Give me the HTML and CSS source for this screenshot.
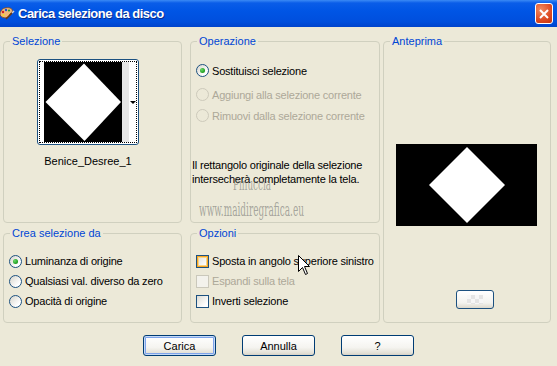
FILE: index.html
```html
<!DOCTYPE html>
<html lang="it">
<head>
    <meta charset="UTF-8">
    <title>Carica selezione da disco</title>
    <link rel="stylesheet" href="styles.css">
</head>
<body>
    <div class="window">
        <div class="titlebar">
            <svg class="app-icon" width="16" height="16" viewBox="0 0 16 16">
                <path d="M2 5 C3 2 8 1 11 2 C14 3 14 6 12 7 C10 8 11 10 9 11 C6 13 1 11 1 8 C1 7 1.5 6 2 5 Z" fill="#f0b878" stroke="#8a4a1c" stroke-width="0.8"/>
                <circle cx="4" cy="6" r="1.2" fill="#d02020"/>
                <circle cx="7" cy="4" r="1.2" fill="#2050d0"/>
                <circle cx="10" cy="4.5" r="1.1" fill="#20a030"/>
                <circle cx="4.5" cy="9" r="1.1" fill="#f0e020"/>
                <path d="M7 13 L13 7" stroke="#6a3a10" stroke-width="1.6"/>
                <path d="M13 7 L15 5" stroke="#d0d0d0" stroke-width="1.4"/>
            </svg>
            <span class="title">Carica selezione da disco</span>
            <span class="close-btn">
                <svg width="10" height="10" viewBox="0 0 10 10">
                    <path d="M1 1 L9 9 M9 1 L1 9" stroke="#fff" stroke-width="2"/>
                </svg>
            </span>
        </div>

        <div class="content">
            <div class="panels">
                <div class="left-grid">
                    <fieldset class="group">
                        <legend>Selezione</legend>
                        <div class="sel-body">
                            <div class="thumb">
                                <div class="thumb-focus">
                                    <svg class="thumb-img" width="78" height="80" viewBox="0 0 78 80">
                                        <rect width="78" height="80" fill="#000"/>
                                        <polygon points="40,1.5 77,40 40.5,79 1.5,40" fill="#fff"/>
                                    </svg>
                                    <span class="thumb-strip"></span>
                                    <span class="thumb-arrow"></span>
                                </div>
                            </div>
                            <div class="thumb-name">Benice_Desree_1</div>
                        </div>
                    </fieldset>

                    <fieldset class="group">
                        <legend>Operazione</legend>
                        <div class="op-body">
                            <div class="choices op-choices">
                                <div class="choice"><span class="radio checked"></span>Sostituisci selezione</div>
                                <div class="choice disabled"><span class="radio"></span>Aggiungi alla selezione corrente</div>
                                <div class="choice disabled"><span class="radio"></span>Rimuovi dalla selezione corrente</div>
                            </div>
                            <p class="note">Il rettangolo originale della selezione<br>intersecherà completamente la tela.</p>
                            <div class="watermark">
                                <span class="wm-name">Pinuccia</span>
                                <span class="wm-site">www.maidiregrafica.eu</span>
                            </div>
                        </div>
                    </fieldset>

                    <fieldset class="group">
                        <legend>Crea selezione da</legend>
                        <div class="choices">
                            <div class="choice"><span class="radio checked"></span>Luminanza di origine</div>
                            <div class="choice"><span class="radio"></span>Qualsiasi val. diverso da zero</div>
                            <div class="choice"><span class="radio"></span>Opacità di origine</div>
                        </div>
                    </fieldset>

                    <fieldset class="group">
                        <legend>Opzioni</legend>
                        <div class="choices">
                            <div class="choice"><span class="check hover"></span>Sposta in angolo superiore sinistro</div>
                            <div class="choice disabled"><span class="check"></span>Espandi sulla tela</div>
                            <div class="choice"><span class="check"></span>Inverti selezione</div>
                        </div>
                    </fieldset>
                </div>

                <fieldset class="group preview">
                    <legend>Anteprima</legend>
                    <svg class="preview-img" width="141" height="82" viewBox="0 0 141 82">
                        <rect width="141" height="82" fill="#000"/>
                        <polygon points="71,3 109,41 71,79 33,41" fill="#fff"/>
                    </svg>
                    <div class="preview-btn"><span class="checker"></span></div>
                </fieldset>
            </div>

            <div class="buttons">
                <button class="btn default">Carica</button>
                <button class="btn">Annulla</button>
                <button class="btn">?</button>
            </div>
        </div>

        <svg class="cursor" width="13" height="21" viewBox="0 0 13 21">
            <polygon points="0.5,0.5 0.5,16.5 4.5,12.5 7.5,19.5 9.5,18.5 6.5,11.5 11.5,11.5" fill="#fff" stroke="#000" stroke-width="1"/>
        </svg>
    </div>
</body>
</html>
```

FILE: styles.css
```css
* {
    margin: 0;
    padding: 0;
    box-sizing: border-box;
}

body {
    width: 557px;
    height: 366px;
    overflow: hidden;
    background-color: #ece9d8;
    font-family: 'Liberation Sans', Arial, sans-serif;
    font-size: 11px;
    color: #000;
}

.window {
    position: relative;
    height: 366px;
}

/* barra del titolo */
.titlebar {
    height: 27px;
    display: flex;
    align-items: center;
    background: linear-gradient(#3b8af5 0, #0a5de8 3px, #0055e5 40%, #004fdd 80%, #0044cc 100%);
    color: white;
}

.app-icon {
    margin: 0 3px 0 -1px;
}

.title {
    flex: 1;
    font-size: 13px;
    font-weight: bold;
    letter-spacing: -0.5px;
    text-shadow: 1px 1px 0 #0a2c8c;
}

.close-btn {
    width: 18px;
    height: 21px;
    margin-right: 4px;
    border: 1px solid #fff;
    border-radius: 3px;
    background: radial-gradient(circle at 30% 30%, #f08a60, #dd4a22 60%, #c2320e);
    display: flex;
    align-items: center;
    justify-content: center;
}

/* contenuto */
.content {
    padding: 8px 6px 0 3px;
}

.panels {
    display: flex;
    gap: 3px;
}

.left-grid {
    display: grid;
    grid-template-columns: 179px 190px;
    grid-template-rows: 188px 96px;
    column-gap: 8px;
    row-gap: 4px;
}

.group {
    border: 1px solid #d0d0bf;
    border-radius: 4px;
    min-width: 0;
}

.group legend {
    margin-left: 6px;
    padding: 0 2px;
    line-height: 13px;
    color: #0046d5;
}

.preview {
    width: 169px;
    height: 288px;
}

/* selezione */
.sel-body {
    display: flex;
    flex-direction: column;
    align-items: center;
    width: 102px;
    margin: 11px 0 0 33px;
}

.thumb {
    width: 102px;
    height: 86px;
    border: 1px solid #1c5180;
    border-radius: 3px;
    padding: 1px;
    background: #fff;
}

.thumb-focus {
    height: 100%;
    border: 1px dotted #000;
    display: flex;
    align-items: center;
    padding-left: 4px;
}

.thumb-img {
    display: block;
}

.thumb-strip {
    width: 7px;
    height: 80px;
    background: #e6e6e6;
}

.thumb-arrow {
    margin-left: 1px;
    border-left: 3px solid transparent;
    border-right: 3px solid transparent;
    border-top: 3px solid #000;
}

.thumb-name {
    margin-top: 9px;
    line-height: 14px;
}

/* operazione */
.op-body {
    position: relative;
    padding: 12px 0 0 1px;
}

.choices {
    padding: 11px 0 0 5px;
}

.op-choices {
    padding: 0 0 0 4px;
}

.choice {
    display: flex;
    align-items: center;
    height: 20px;
    letter-spacing: -0.2px;
}

.op-choices .choice {
    height: 21px;
}

.op-choices .choice:first-child {
    margin-bottom: 3px;
}

.choice.disabled {
    color: #aca899;
}

.radio {
    width: 13px;
    height: 13px;
    margin-right: 3px;
    border: 1px solid #1c5180;
    border-radius: 50%;
    background: linear-gradient(135deg, #d8d6cc, #fff 75%);
    display: flex;
    align-items: center;
    justify-content: center;
    flex: none;
}

.radio.checked::after {
    content: '';
    width: 5px;
    height: 5px;
    border-radius: 50%;
    background: radial-gradient(circle at 35% 35%, #6ad86a, #21a121 65%, #167816);
}

.disabled .radio {
    border-color: #cdcabb;
    background: #ece9d8;
}

.check {
    width: 13px;
    height: 13px;
    margin-right: 3px;
    border: 1px solid #1c5180;
    background: linear-gradient(135deg, #dcdcd5, #fff 80%);
    flex: none;
}

.check.hover {
    box-shadow: inset 0 0 0 1px #f6a623, inset 0 0 0 2px #fcd686;
}

.disabled .check {
    border-color: #cac8bb;
    background: #f3f2ec;
}

.note {
    margin-top: 32px;
    line-height: 14px;
    letter-spacing: -0.2px;
}

.watermark {
    position: absolute;
    left: 0;
    top: 0;
    color: rgba(105, 105, 105, 0.55);
    font-family: 'DejaVu Serif', serif;
}

.wm-name {
    position: absolute;
    left: 42px;
    top: 129px;
    font-size: 16px;
    line-height: 16px;
    white-space: nowrap;
    transform: scaleX(0.55);
    transform-origin: left top;
}

.wm-site {
    position: absolute;
    left: 8px;
    top: 152px;
    font-size: 19px;
    line-height: 19px;
    white-space: nowrap;
    transform: scaleX(0.47);
    transform-origin: left top;
}

/* anteprima */
.preview-img {
    display: block;
    margin: 96px 0 0 12px;
}

.preview-btn {
    width: 38px;
    height: 19px;
    margin: 64px 0 0 72px;
    border: 1px solid #1c5180;
    border-radius: 3px;
    background: linear-gradient(#fff, #f3f3ef 70%, #dcd8cc);
    display: flex;
    align-items: center;
    justify-content: center;
}

.checker {
    width: 16px;
    height: 9px;
    background-color: #f6f6f6;
    background-image:
        linear-gradient(45deg, #e4e4e4 25%, transparent 25%, transparent 75%, #e4e4e4 75%),
        linear-gradient(45deg, #e4e4e4 25%, transparent 25%, transparent 75%, #e4e4e4 75%);
    background-size: 8px 8px;
    background-position: 0 0, 4px 4px;
}

/* pulsanti */
.buttons {
    display: flex;
    justify-content: center;
    gap: 26px;
    margin-top: 12px;
    padding-left: 3px;
}

.btn {
    width: 73px;
    height: 21px;
    border: 1px solid #003c74;
    border-radius: 3px;
    background: linear-gradient(#fff, #f5f4f0 60%, #e3e0d6 90%, #d6d0c5);
    font-family: inherit;
    font-size: 11px;
    color: #000;
}

.btn.default {
    box-shadow: inset 0 0 0 1px #c4d9f7, inset 0 0 0 2px #7fa4ea;
}

.cursor {
    position: absolute;
    left: 298px;
    top: 255px;
}
```
